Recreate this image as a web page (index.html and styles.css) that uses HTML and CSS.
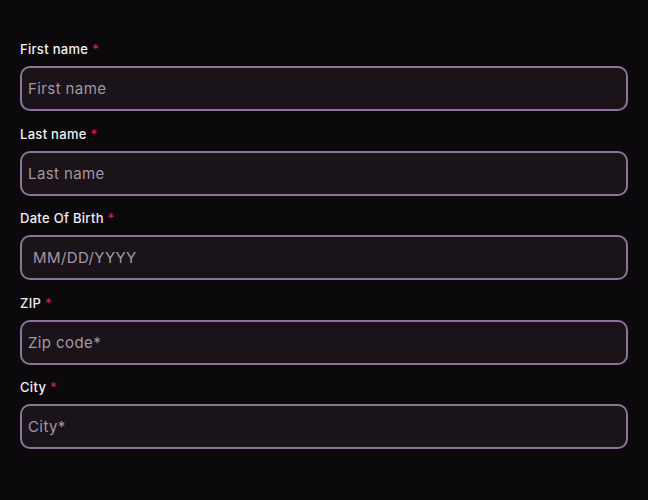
FILE: index.html
```html
<!DOCTYPE html>
<html lang="en">
<head>
<meta charset="utf-8">
<title>Form</title>
<link rel="stylesheet" href="styles.css">
</head>
<body>
<form class="form">
  <div class="field">
    <label class="label" for="fn">First name <span class="req">*</span></label>
    <input class="input" id="fn" type="text" placeholder="First name">
  </div>
  <div class="field">
    <label class="label" for="ln">Last name <span class="req">*</span></label>
    <input class="input" id="ln" type="text" placeholder="Last name">
  </div>
  <div class="field">
    <label class="label" for="dob">Date Of Birth <span class="req">*</span></label>
    <input class="input input-date" id="dob" type="text" placeholder="MM/DD/YYYY">
  </div>
  <div class="field">
    <label class="label" for="zip">ZIP <span class="req">*</span></label>
    <input class="input" id="zip" type="text" placeholder="Zip code*">
  </div>
  <div class="field">
    <label class="label" for="city">City <span class="req">*</span></label>
    <input class="input" id="city" type="text" placeholder="City*">
  </div>
</form>
</body>
</html>
```
FILE: styles.css
```css
html, body {
  margin: 0;
  padding: 0;
  background: #0b090c;
}
body {
  font-family: Inter, "Noto Sans", "Liberation Sans", sans-serif;
  color: #f2eef2;
}
.form {
  display: flex;
  flex-direction: column;
  gap: 14.5px;
  padding: 41px 20px 0 20px;
  width: 608px;
}
.field {
  display: flex;
  flex-direction: column;
}
.label {
  display: block;
  font-size: 13px;
  font-weight: 500;
  letter-spacing: 0.3px;
  line-height: 17px;
  height: 17px;
  margin-bottom: 8px;
  color: #f1edf1;
}
.req {
  color: #d81b4f;
}
.input {
  box-sizing: border-box;
  width: 608px;
  height: 45px;
  margin: 0;
  padding: 0 6px;
  border: 2px solid #8e7299;
  border-radius: 10px;
  background: #1a1319;
  font-family: inherit;
  font-size: 15px;
  letter-spacing: 0.4px;
  color: #e0d6e0;
  outline: none;
}
.input::placeholder {
  color: #a596a6;
  opacity: 1;
}
.input-date {
  padding-left: 11px;
}
```
